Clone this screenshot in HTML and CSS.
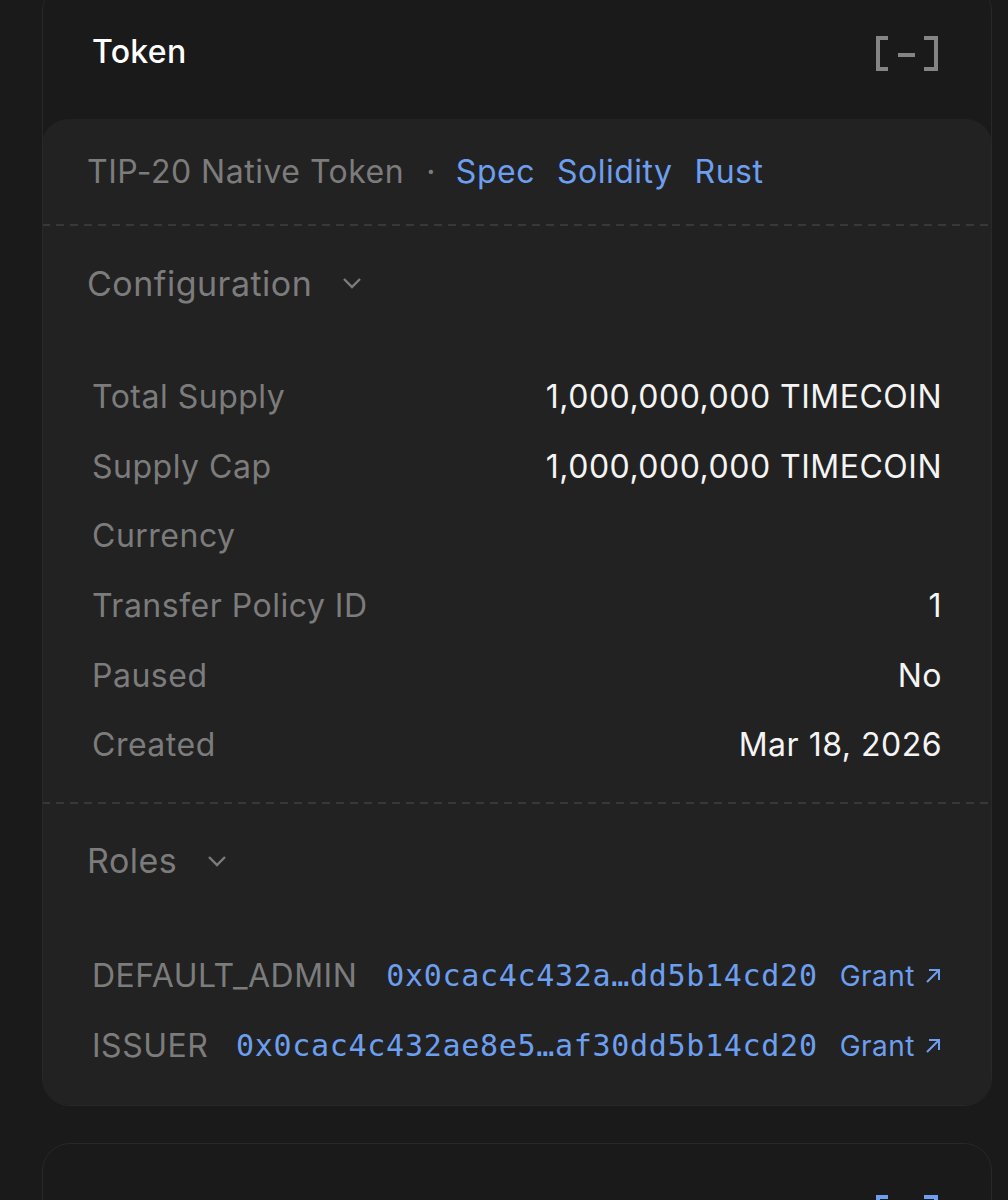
FILE: index.html
```html
<!DOCTYPE html>
<html lang="en">
<head>
    <meta charset="UTF-8">
    <meta name="viewport" content="width=device-width, initial-scale=1.0">
    <title>Token</title>
    <link rel="stylesheet" href="styles.css">
</head>
<body>
    <div class="page">
        <div class="card">
            <div class="card-head">
                <h2>Token</h2>
                <svg class="toggle" width="66" height="38" viewBox="0 0 66 38">
                    <path d="M14 4 H4 V35 H14 M24 21 H41 M50 4 H62 V35 H50" fill="none" stroke="currentColor" stroke-width="4"/>
                </svg>
            </div>
            <div class="panel">
                <div class="meta">
                    <span>TIP-20 Native Token</span>
                    <span class="dot">·</span>
                    <a href="#">Spec</a>
                    <a href="#">Solidity</a>
                    <a href="#">Rust</a>
                </div>

                <div class="divider"></div>
                <div class="section">
                    <div class="section-head">
                        Configuration
                        <svg class="chev" width="20" height="12" viewBox="0 0 20 12"><path d="M2 2 L10 10 L18 2" fill="none" stroke="currentColor" stroke-width="2.4"/></svg>
                    </div>
                    <div class="rows">
                        <div class="row"><span class="label">Total Supply</span><span class="value">1,000,000,000 TIMECOIN</span></div>
                        <div class="row"><span class="label">Supply Cap</span><span class="value">1,000,000,000 TIMECOIN</span></div>
                        <div class="row"><span class="label">Currency</span><span class="value"></span></div>
                        <div class="row"><span class="label">Transfer Policy ID</span><span class="value">1</span></div>
                        <div class="row"><span class="label">Paused</span><span class="value">No</span></div>
                        <div class="row"><span class="label">Created</span><span class="value">Mar 18, 2026</span></div>
                    </div>
                </div>

                <div class="divider"></div>
                <div class="section roles">
                    <div class="section-head">
                        Roles
                        <svg class="chev" width="20" height="12" viewBox="0 0 20 12"><path d="M2 2 L10 10 L18 2" fill="none" stroke="currentColor" stroke-width="2.4"/></svg>
                    </div>
                    <div class="rows">
                        <div class="row">
                            <span class="label">DEFAULT_ADMIN</span>
                            <span class="addr">0x0cac4c432a…dd5b14cd20</span>
                            <a href="#" class="grant">Grant <svg width="18" height="18" viewBox="0 0 18 18"><path d="M3 15 L15 3 M5 3 H15 V13" fill="none" stroke="currentColor" stroke-width="2"/></svg></a>
                        </div>
                        <div class="row">
                            <span class="label">ISSUER</span>
                            <span class="addr">0x0cac4c432ae8e5…af30dd5b14cd20</span>
                            <a href="#" class="grant">Grant <svg width="18" height="18" viewBox="0 0 18 18"><path d="M3 15 L15 3 M5 3 H15 V13" fill="none" stroke="currentColor" stroke-width="2"/></svg></a>
                        </div>
                    </div>
                </div>
            </div>
        </div>

        <div class="card">
            <div class="card-head end">
                <svg class="toggle active" width="66" height="38" viewBox="0 0 66 38">
                    <path d="M14 4 H4 V35 H14 M24 21 H41 M50 4 H62 V35 H50" fill="none" stroke="currentColor" stroke-width="4"/>
                </svg>
            </div>
        </div>
    </div>
</body>
</html>
```

FILE: styles.css
```css
body {
    margin: 0;
    background-color: #1a1a1a;
    font-family: Inter, "Noto Sans", sans-serif;
    color: #f2f2f2;
    overflow: hidden;
}
.page {
    margin-top: -17px;
    padding: 0 16px 0 42px;
    display: flex;
    flex-direction: column;
    gap: 37px;
}
.card {
    border: 1px solid #282828;
    border-radius: 28px;
    overflow: hidden;
}
.card-head {
    height: 135px;
    display: flex;
    align-items: center;
    justify-content: space-between;
    padding: 0 51px 0 49px;
}
.card-head.end {
    justify-content: flex-end;
}
.card-head h2 {
    margin: 0;
    font-size: 32px;
    font-weight: 500;
    letter-spacing: 0.3px;
    color: #fff;
}
.toggle {
    color: #848484;
    margin-top: 2px;
}
.toggle.active {
    color: #6d9ff0;
}
.panel {
    background-color: #222222;
    border-radius: 26px 26px 0 0;
    margin: 0 -1px -1px;
    padding-bottom: 25px;
}
.meta {
    height: 105px;
    display: flex;
    align-items: center;
    padding-left: 45px;
    font-size: 32px;
    letter-spacing: 0.5px;
    color: #7c7c7c;
}
.meta .dot {
    margin: 0 20px 0 22px;
}
.meta a {
    color: #6d9ff0;
    text-decoration: none;
    margin-right: 22px;
}
.divider {
    height: 2px;
    background-image: repeating-linear-gradient(to right, #383838 0 8px, transparent 8px 14px);
}
.section-head {
    margin-top: 37px;
    padding-left: 45px;
    height: 40px;
    display: flex;
    align-items: center;
    gap: 30px;
    font-size: 34px;
    letter-spacing: 0.5px;
    color: #7c7c7c;
}
.chev {
    color: #7c7c7c;
}
.rows {
    margin-top: 59px;
    padding: 0 50px 22px;
}
.roles .rows {
    margin-top: 60px;
    padding-bottom: 0;
}
.row {
    height: 69.6px;
    display: flex;
    align-items: center;
    justify-content: space-between;
    font-size: 32px;
    letter-spacing: 0.5px;
}
.roles .row {
    height: 70px;
}
.label {
    color: #7c7c7c;
    white-space: nowrap;
}
.value {
    color: #f4f4f4;
}
.addr {
    flex: 1;
    margin-left: 22px;
    text-align: right;
    white-space: nowrap;
    overflow: hidden;
    font-family: "DejaVu Sans Mono", monospace;
    font-size: 30px;
    letter-spacing: 0.7px;
    color: #6d9ff0;
}
.grant {
    margin-left: 22px;
    display: flex;
    align-items: center;
    gap: 9px;
    font-size: 28px;
    letter-spacing: 0.5px;
    color: #6d9ff0;
    text-decoration: none;
}
```
